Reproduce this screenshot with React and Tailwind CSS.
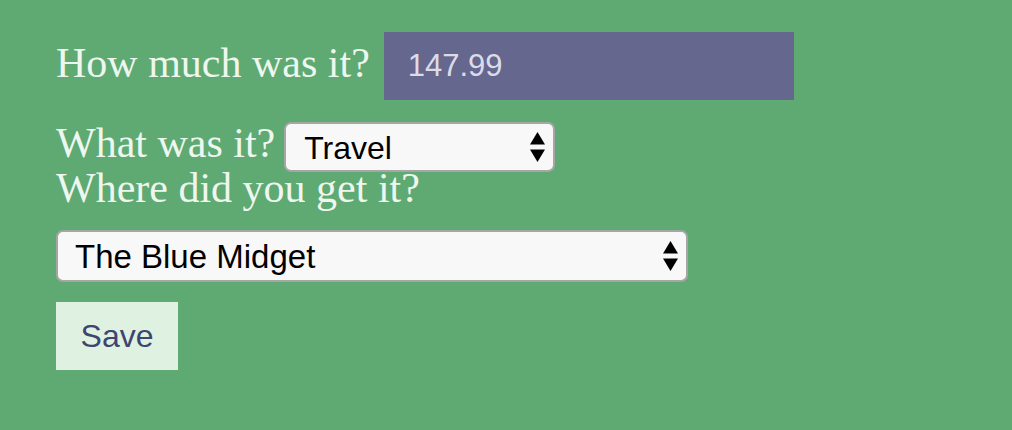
import React from 'react';

function Arrows() {
  return (
    <svg
      className="pointer-events-none absolute right-[10px] top-1/2 -translate-y-1/2"
      width="15"
      height="30"
      viewBox="0 0 15 30"
    >
      <path d="M7.5 0 L15 12.5 L0 12.5 Z" fill="#000" />
      <path d="M0 17.5 L15 17.5 L7.5 30 Z" fill="#000" />
    </svg>
  );
}

function App() {
  return (
    <div className="min-h-screen bg-[#5eaa72] px-[56px] pt-[32px] font-['Liberation_Sans',Arial,sans-serif]">
      {/* Amount */}
      <div className="flex items-start gap-[14px]">
        <label className="mt-[7px] text-[42px] leading-[48px] text-[#eef7ef] font-['Liberation_Serif',serif]">
          How much was it?
        </label>
        <input
          type="text"
          defaultValue="147.99"
          className="h-[68px] w-[410px] bg-[#66678f] pl-[24px] text-[31px] text-[#dcdce8] outline-none"
        />
      </div>

      {/* Category */}
      <div className="mt-[22px] flex items-start gap-[9px]">
        <label className="-mt-[3px] text-[42px] leading-[48px] text-[#eef7ef] font-['Liberation_Serif',serif]">
          What was it?
        </label>
        <div className="relative">
          <select
            defaultValue="Travel"
            className="h-[50px] w-[271px] appearance-none rounded-[7px] border-2 border-[#a6a6a6] bg-[#f8f8f8] pl-[18px] text-[32px] text-black outline-none"
          >
            <option>Travel</option>
            <option>Food</option>
            <option>Other</option>
          </select>
          <Arrows />
        </div>
      </div>

      {/* Place */}
      <label className="-mt-[8px] block text-[42px] leading-[48px] text-[#eef7ef] font-['Liberation_Serif',serif]">
        Where did you get it?
      </label>
      <div className="relative mt-[18px] w-[632px]">
        <select
          defaultValue="The Blue Midget"
          className="h-[52px] w-[632px] appearance-none rounded-[7px] border-2 border-[#a6a6a6] bg-[#f8f8f8] pl-[17px] text-[33px] text-black outline-none"
        >
          <option>The Blue Midget</option>
          <option>Starbug</option>
        </select>
        <Arrows />
      </div>

      <button className="mt-[20px] h-[68px] w-[122px] bg-[#dff2e1] text-[32px] text-[#3f4470]">
        Save
      </button>
    </div>
  );
}

export default App;
